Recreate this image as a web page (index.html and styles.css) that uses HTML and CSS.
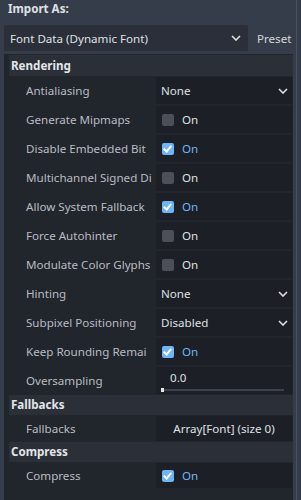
FILE: index.html
```html
<!DOCTYPE html>
<html lang="en">
<head>
    <meta charset="UTF-8">
    <meta name="viewport" content="width=device-width, initial-scale=1.0">
    <title>Import</title>
    <link rel="stylesheet" href="styles.css">
</head>
<body>
    <div class="dock">
        <div class="import-title">Import As:</div>
        <div class="import-bar">
            <div class="dropdown">
                <span>Font Data (Dynamic Font)</span>
                <svg class="chevron" width="10" height="6" viewBox="0 0 10 6"><path d="M1 1l4 4 4-4" fill="none" stroke="#e0e0e0" stroke-width="1.6"/></svg>
            </div>
            <div class="preset">Preset</div>
        </div>

        <div class="inspector">
            <div class="section first">Rendering</div>
            <div class="row">
                <div class="label">Antialiasing</div>
                <div class="value select">None
                    <svg class="chevron" width="10" height="6" viewBox="0 0 10 6"><path d="M1 1l4 4 4-4" fill="none" stroke="#e0e0e0" stroke-width="1.6"/></svg>
                </div>
            </div>
            <div class="row">
                <div class="label">Generate Mipmaps</div>
                <div class="value"><span class="check"></span>On</div>
            </div>
            <div class="row">
                <div class="label">Disable Embedded Bit</div>
                <div class="value on"><span class="check checked"></span>On</div>
            </div>
            <div class="row">
                <div class="label">Multichannel Signed Di</div>
                <div class="value"><span class="check"></span>On</div>
            </div>
            <div class="row">
                <div class="label">Allow System Fallback</div>
                <div class="value on"><span class="check checked"></span>On</div>
            </div>
            <div class="row">
                <div class="label">Force Autohinter</div>
                <div class="value"><span class="check"></span>On</div>
            </div>
            <div class="row">
                <div class="label">Modulate Color Glyphs</div>
                <div class="value"><span class="check"></span>On</div>
            </div>
            <div class="row">
                <div class="label">Hinting</div>
                <div class="value select">None
                    <svg class="chevron" width="10" height="6" viewBox="0 0 10 6"><path d="M1 1l4 4 4-4" fill="none" stroke="#e0e0e0" stroke-width="1.6"/></svg>
                </div>
            </div>
            <div class="row">
                <div class="label">Subpixel Positioning</div>
                <div class="value select">Disabled
                    <svg class="chevron" width="10" height="6" viewBox="0 0 10 6"><path d="M1 1l4 4 4-4" fill="none" stroke="#e0e0e0" stroke-width="1.6"/></svg>
                </div>
            </div>
            <div class="row">
                <div class="label">Keep Rounding Remai</div>
                <div class="value on"><span class="check checked"></span>On</div>
            </div>
            <div class="row">
                <div class="label">Oversampling</div>
                <div class="value slider">
                    <span class="num">0.0</span>
                    <div class="track"><span class="grabber"></span></div>
                </div>
            </div>

            <div class="section">Fallbacks</div>
            <div class="row short">
                <div class="label">Fallbacks</div>
                <div class="value center">Array[Font] (size 0)</div>
            </div>

            <div class="section">Compress</div>
            <div class="row short">
                <div class="label">Compress</div>
                <div class="value on"><span class="check checked"></span>On</div>
            </div>
        </div>
    </div>
</body>
</html>
```

FILE: styles.css
```css
html, body {
    margin: 0;
    height: 100%;
    background-color: #363d4a;
    font-family: "Noto Sans", sans-serif;
    font-size: 11.6px;
    color: #dfe1e4;
    overflow: hidden;
}

.dock {
    height: 100%;
    margin-right: 4px;
    border-right: 1px solid #4a5262;
    display: flex;
    flex-direction: column;
}

.import-title {
    font-weight: bold;
    padding: 0 0 0 8px;
    height: 21px;
    line-height: 18px;
}

.import-bar {
    display: flex;
    align-items: center;
    padding: 4px 0 0 4px;
    height: 26px;
}

.dropdown {
    width: 244px;
    height: 26px;
    box-sizing: border-box;
    padding: 0 7px 0 6px;
    background-color: #2a2f39;
    border-radius: 2px;
    display: flex;
    align-items: center;
    justify-content: space-between;
}

.preset {
    margin-left: 9px;
    color: #d6d8dc;
}

.inspector {
    flex: 1;
    margin: 3px 3px 0 4px;
    background-color: #21252c;
}

.section {
    height: 20px;
    line-height: 19px;
    margin-left: 5px;
    padding-left: 2px;
    background-color: #2a2f38;
    font-weight: bold;
    color: #e4e6e9;
}

.section.first {
    height: 21px;
    line-height: 21px;
    margin-top: 1px;
}

.row {
    display: flex;
    height: 29px;
    align-items: center;
}

.row.short {
    height: 27px;
}

.label {
    width: 130px;
    padding-left: 22px;
    overflow: hidden;
    white-space: nowrap;
    color: #b9bcc2;
}

.value {
    width: 131px;
    height: 27px;
    padding-left: 5px;
    background-color: #1c1f25;
    display: flex;
    align-items: center;
    color: #dfe1e4;
}

.row.short .value {
    height: 25px;
}

.value.on {
    color: #6fb6f5;
}

.value.select {
    justify-content: space-between;
    padding-right: 4px;
    width: 127px;
}

.value.center {
    justify-content: center;
    padding-left: 0;
    width: 136px;
}

.check {
    width: 12px;
    height: 12px;
    margin: 0 8px 0 1px;
    border-radius: 2px;
    background-color: #4a4f58;
    position: relative;
}

.check.checked {
    background-color: #6db5f5;
}

.check.checked::after {
    content: "";
    position: absolute;
    left: 3px;
    top: 1px;
    width: 3px;
    height: 6px;
    border: solid #ffffff;
    border-width: 0 2px 2px 0;
    transform: rotate(40deg);
}

.value.slider {
    flex-direction: column;
    align-items: stretch;
    justify-content: center;
}

.num {
    padding-left: 9px;
    line-height: 16px;
}

.track {
    position: relative;
    height: 2px;
    margin: 3px 8px 0 0;
    background-color: #3c424d;
}

.grabber {
    position: absolute;
    left: 0;
    top: -1px;
    width: 3px;
    height: 4px;
    background-color: #e8e8e8;
}
```
